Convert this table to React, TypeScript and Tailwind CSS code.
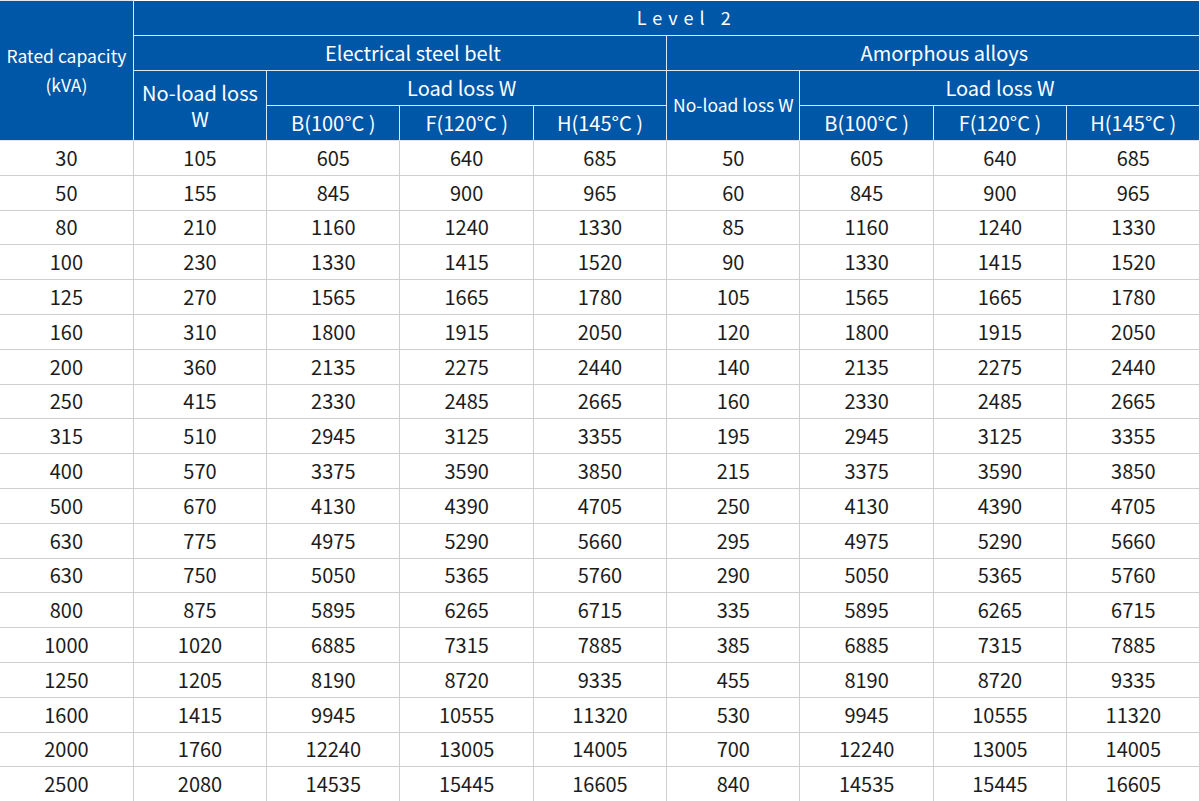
const rows: number[][] = [
  [30, 105, 605, 640, 685, 50, 605, 640, 685],
  [50, 155, 845, 900, 965, 60, 845, 900, 965],
  [80, 210, 1160, 1240, 1330, 85, 1160, 1240, 1330],
  [100, 230, 1330, 1415, 1520, 90, 1330, 1415, 1520],
  [125, 270, 1565, 1665, 1780, 105, 1565, 1665, 1780],
  [160, 310, 1800, 1915, 2050, 120, 1800, 1915, 2050],
  [200, 360, 2135, 2275, 2440, 140, 2135, 2275, 2440],
  [250, 415, 2330, 2485, 2665, 160, 2330, 2485, 2665],
  [315, 510, 2945, 3125, 3355, 195, 2945, 3125, 3355],
  [400, 570, 3375, 3590, 3850, 215, 3375, 3590, 3850],
  [500, 670, 4130, 4390, 4705, 250, 4130, 4390, 4705],
  [630, 775, 4975, 5290, 5660, 295, 4975, 5290, 5660],
  [630, 750, 5050, 5365, 5760, 290, 5050, 5365, 5760],
  [800, 875, 5895, 6265, 6715, 335, 5895, 6265, 6715],
  [1000, 1020, 6885, 7315, 7885, 385, 6885, 7315, 7885],
  [1250, 1205, 8190, 8720, 9335, 455, 8190, 8720, 9335],
  [1600, 1415, 9945, 10555, 11320, 530, 9945, 10555, 11320],
  [2000, 1760, 12240, 13005, 14005, 700, 12240, 13005, 14005],
  [2500, 2080, 14535, 15445, 16605, 840, 14535, 15445, 16605],
];

const th = "border border-[#dfe8f2] bg-[#0057a8] text-white font-normal p-0 leading-[1.3]";
const td = "border border-[#cfcfcf] text-center p-0";

export default function App() {
  return (
    <div className="w-[1200px] h-[801px] bg-white overflow-hidden font-['Noto_Sans_CJK_SC','Noto_Sans',sans-serif]">
      <table className="w-[1200px] table-fixed border-collapse text-center">
        <colgroup>
          {Array.from({ length: 9 }).map((_, i) => (
            <col key={i} className="w-[133.33px]" />
          ))}
        </colgroup>
        <thead>
          <tr className="h-[35px]">
            <th rowSpan={4} className={`${th} text-[17.5px] leading-[29px] pb-[2px] border-l-0`}>
              Rated capacity
              <br />
              (kVA)
            </th>
            <th colSpan={8} className={`${th} text-[18px] tracking-[6px] pl-[40px] border-t-0`}>
              Level 2
            </th>
          </tr>
          <tr className="h-[35px]">
            <th colSpan={4} className={`${th} text-[20px] pl-[26px]`}>Electrical steel belt</th>
            <th colSpan={4} className={`${th} text-[20px] pl-[22px]`}>Amorphous alloys</th>
          </tr>
          <tr className="h-[35px]">
            <th rowSpan={2} className={`${th} text-[20px] px-2`}>
              No-load loss W
            </th>
            <th colSpan={3} className={`${th} text-[20px] pr-[10px]`}>Load loss W</th>
            <th rowSpan={2} className={`${th} text-[17.5px]`}>No-load loss W</th>
            <th colSpan={3} className={`${th} text-[20px]`}>Load loss W</th>
          </tr>
          <tr className="h-[35px]">
            <th className={`${th} text-[20px]`}>B(100°C )</th>
            <th className={`${th} text-[20px]`}>F(120°C )</th>
            <th className={`${th} text-[20px]`}>H(145°C )</th>
            <th className={`${th} text-[20px]`}>B(100°C )</th>
            <th className={`${th} text-[20px]`}>F(120°C )</th>
            <th className={`${th} text-[20px]`}>H(145°C )</th>
          </tr>
        </thead>
        <tbody className="text-[20px] text-[#1c1c1c]">
          {rows.map((r, i) => (
            <tr key={i} className="h-[34.8px]">
              {r.map((v, j) => (
                <td key={j} className={`${td} ${j === 0 ? "border-l-0" : ""}`}>
                  {v}
                </td>
              ))}
            </tr>
          ))}
        </tbody>
      </table>
    </div>
  );
}
